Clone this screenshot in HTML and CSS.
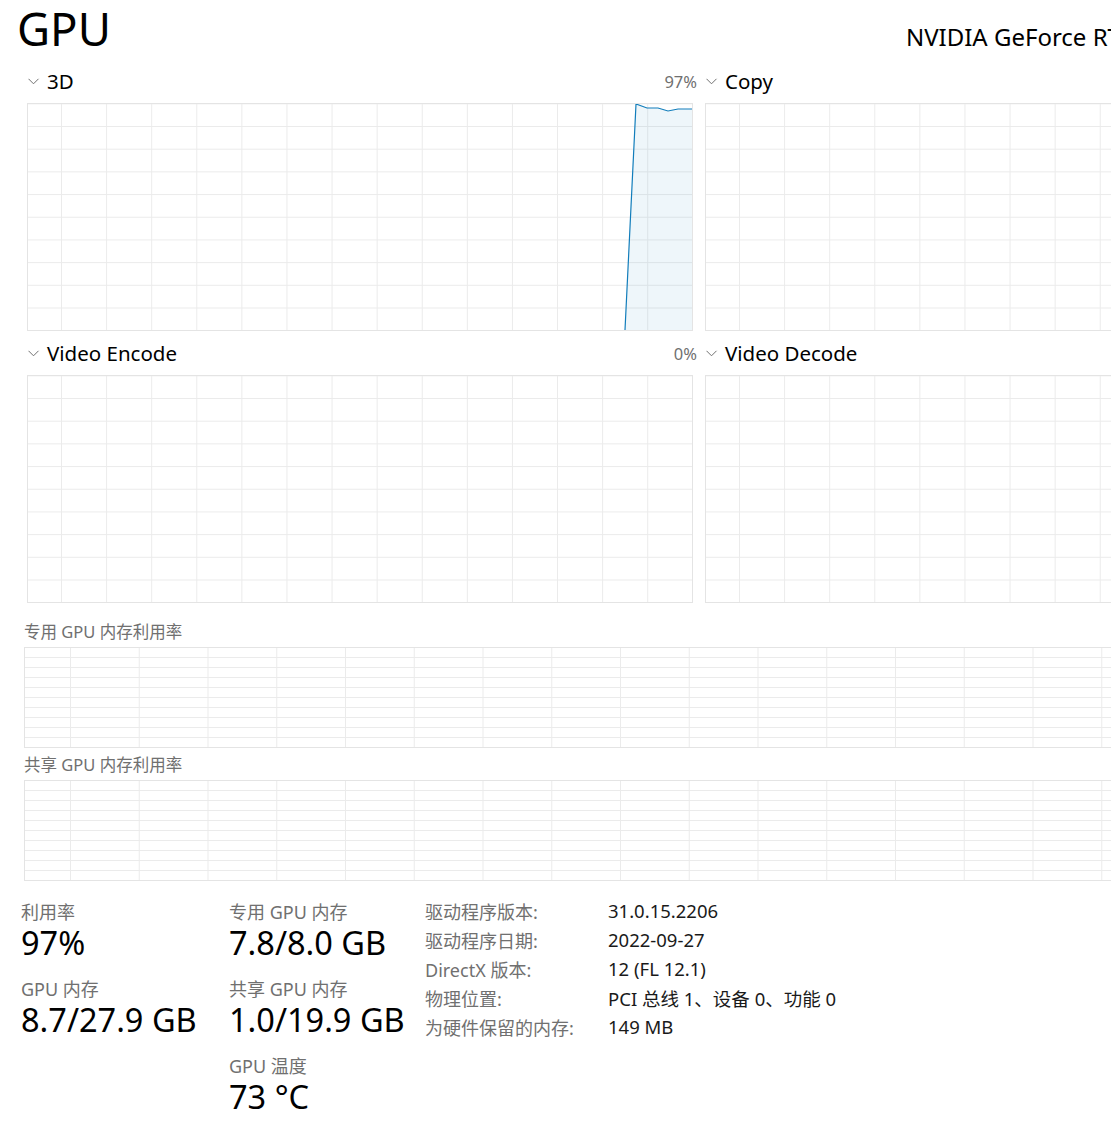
FILE: index.html
```html
<!DOCTYPE html>
<html lang="zh-CN">
<head>
<meta charset="utf-8">
<title>GPU</title>
<link rel="stylesheet" href="styles.css">
</head>
<body>
<div class="page">
  <header class="header">
    <h1 class="title">GPU</h1>
    <div class="device">NVIDIA GeForce RTX 3070 Laptop GPU</div>
  </header>

  <section class="engines">
    <div class="engine">
      <div class="engine-head">
        <svg class="chev" width="12" height="7" viewBox="0 0 12 7"><polyline points="0.5,0.8 5.5,5.8 10.5,0.8" fill="none" stroke="#707070" stroke-width="1"/></svg>
        <span class="engine-name">3D</span>
        <span class="engine-pct">97%</span>
      </div>
      <div class="graph">
        <svg class="plot" viewBox="0 0 664 226" preserveAspectRatio="none">
          <polygon points="597,226 608,0 619,4 630,4 640,7 650,5 664,5 664,226" fill="rgba(17,125,187,0.07)"/>
          <polyline points="597,226 608,0 619,4 630,4 640,7 650,5 664,5" fill="none" stroke="#117dbb" stroke-width="1.2"/>
        </svg>
      </div>
    </div>
    <div class="engine">
      <div class="engine-head">
        <svg class="chev" width="12" height="7" viewBox="0 0 12 7"><polyline points="0.5,0.8 5.5,5.8 10.5,0.8" fill="none" stroke="#707070" stroke-width="1"/></svg>
        <span class="engine-name">Copy</span>
        <span class="engine-pct">0%</span>
      </div>
      <div class="graph"></div>
    </div>
    <div class="engine">
      <div class="engine-head">
        <svg class="chev" width="12" height="7" viewBox="0 0 12 7"><polyline points="0.5,0.8 5.5,5.8 10.5,0.8" fill="none" stroke="#707070" stroke-width="1"/></svg>
        <span class="engine-name">Video Encode</span>
        <span class="engine-pct">0%</span>
      </div>
      <div class="graph"></div>
    </div>
    <div class="engine">
      <div class="engine-head">
        <svg class="chev" width="12" height="7" viewBox="0 0 12 7"><polyline points="0.5,0.8 5.5,5.8 10.5,0.8" fill="none" stroke="#707070" stroke-width="1"/></svg>
        <span class="engine-name">Video Decode</span>
        <span class="engine-pct">0%</span>
      </div>
      <div class="graph"></div>
    </div>
  </section>

  <section class="memory">
    <div class="mem-label">专用 GPU 内存利用率</div>
    <div class="mem-graph"></div>
    <div class="mem-label">共享 GPU 内存利用率</div>
    <div class="mem-graph"></div>
  </section>

  <section class="stats">
    <div class="stat-col">
      <div class="stat">
        <div class="stat-label">利用率</div>
        <div class="stat-value">97%</div>
      </div>
      <div class="stat">
        <div class="stat-label">GPU 内存</div>
        <div class="stat-value">8.7/27.9 GB</div>
      </div>
    </div>
    <div class="stat-col">
      <div class="stat">
        <div class="stat-label">专用 GPU 内存</div>
        <div class="stat-value">7.8/8.0 GB</div>
      </div>
      <div class="stat">
        <div class="stat-label">共享 GPU 内存</div>
        <div class="stat-value">1.0/19.9 GB</div>
      </div>
      <div class="stat">
        <div class="stat-label">GPU 温度</div>
        <div class="stat-value">73 °C</div>
      </div>
    </div>
    <dl class="props">
      <dt>驱动程序版本:</dt><dd>31.0.15.2206</dd>
      <dt>驱动程序日期:</dt><dd>2022-09-27</dd>
      <dt>DirectX 版本:</dt><dd>12 (FL 12.1)</dd>
      <dt>物理位置:</dt><dd>PCI 总线 1、设备 0、功能 0</dd>
      <dt>为硬件保留的内存:</dt><dd>149 MB</dd>
    </dl>
  </section>
</div>
</body>
</html>
```

FILE: styles.css
```css
html, body {
  margin: 0;
  padding: 0;
  background: #ffffff;
  overflow: hidden;
}

.page {
  width: 1400px;
  font-family: "Noto Sans", "Noto Sans CJK SC", sans-serif;
  color: #000;
}

.header {
  display: flex;
  align-items: baseline;
  height: 60px;
}

.title {
  margin: 0 0 0 17px;
  font-size: 45.5px;
  font-weight: 400;
  line-height: 56px;
}

.device {
  margin-left: 795px;
  font-size: 24px;
  white-space: nowrap;
}

.engines {
  display: grid;
  grid-template-columns: 666px 666px;
  column-gap: 12px;
  row-gap: 9px;
  padding-left: 27px;
  margin-top: 8px;
}

.engine-head {
  display: flex;
  align-items: center;
  height: 26px;
  margin-bottom: 9px;
}

.chev {
  margin-left: 1px;
  margin-right: 7px;
  flex: none;
}

.engine-name {
  font-size: 20.5px;
  line-height: 26px;
}

.engine-pct {
  margin-left: auto;
  margin-right: -4px;
  font-size: 16.5px;
  color: #707070;
}

.graph {
  position: relative;
  height: 226px;
  border: 1px solid #e4e4e4;
  background-image:
    linear-gradient(90deg, #ebebeb 1px, transparent 1px),
    linear-gradient(180deg, #ebebeb 1px, transparent 1px);
  background-size: 45.1px 100%, 100% 22.7px;
  background-position: 33px 0, 0 22px;
}

.plot {
  position: absolute;
  left: 0;
  top: 0;
  width: 100%;
  height: 100%;
}

.memory {
  padding-left: 24px;
  margin-top: 18px;
}

.mem-label {
  font-size: 16.5px;
  line-height: 22px;
  color: #707070;
  margin-bottom: 4px;
}

.mem-graph {
  height: 99px;
  width: 1360px;
  border: 1px solid #e4e4e4;
  margin-bottom: 6px;
  background-image:
    linear-gradient(90deg, #ebebeb 1px, transparent 1px),
    linear-gradient(180deg, #ebebeb 1px, transparent 1px);
  background-size: 68.75px 100%, 100% 10px;
  background-position: 45px 0, 0 9px;
}

.stats {
  display: flex;
  padding-left: 21px;
  margin-top: 20px;
}

.stat-col {
  display: flex;
  flex-direction: column;
  gap: 15px;
  width: 208px;
}

.stat-col + .stat-col {
  width: 196px;
}

.stat-label {
  font-size: 18px;
  line-height: 22px;
  color: #707070;
}

.stat-value {
  font-size: 32.5px;
  line-height: 40px;
  white-space: nowrap;
}

.props {
  display: grid;
  grid-template-columns: 183px auto;
  grid-auto-rows: 29px;
  align-items: center;
  margin: -5px 0 0 0;
  font-size: 18px;
}

.props dt {
  color: #707070;
  margin: 0;
}

.props dd {
  margin: 0;
  font-size: 18.5px;
  color: #1a1a1a;
  white-space: nowrap;
}
```
